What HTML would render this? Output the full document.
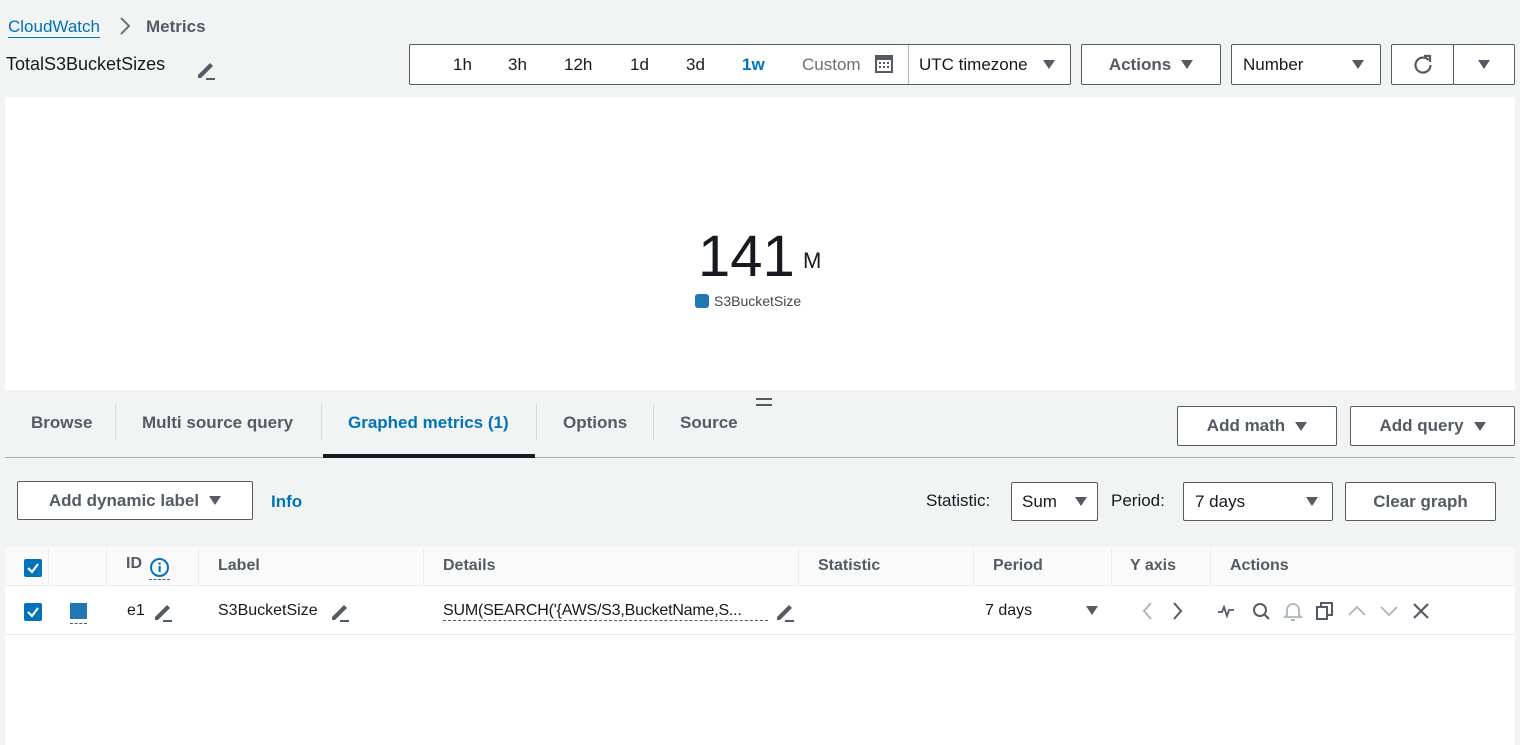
<!DOCTYPE html>
<html><head><meta charset="utf-8"><style>
*{box-sizing:border-box;margin:0;padding:0}
body{width:1520px;height:745px;background:#f2f3f3;font-family:"Liberation Sans",sans-serif;color:#16191f;position:relative;overflow:hidden;font-size:16px}
.a{position:absolute;white-space:nowrap}
.btn{position:absolute;border:1px solid #545b64;border-radius:2px;background:#fff;display:flex;align-items:center;justify-content:center;font-weight:bold;color:#545b64;font-size:16px}
.tri{display:inline-block;width:0;height:0;border-left:6px solid transparent;border-right:6px solid transparent;border-top:9px solid #545b64;margin-left:10px}
.b{font-weight:bold;color:#545b64}
.sep{position:absolute;width:1px;background:#d5dbdb}
</style></head><body>
<div class="a" style="left:8px;top:17px;font-size:17px;color:#0073bb;border-bottom:1px solid #0073bb;line-height:20px">CloudWatch</div>
<svg class="a" style="left:118px;top:16px" width="14" height="20"><path d="M3 2 L11 10 L3 18" stroke="#687078" stroke-width="2" fill="none"/></svg>
<div class="a b" style="left:146px;top:17px;font-size:17px">Metrics</div>
<div class="a" style="left:6px;top:54px;font-size:18px">TotalS3BucketSizes</div>
<svg class="a" style="left:195px;top:58px" width="22" height="22"><path d="M3 17 L15 5 L18 8 L6 20 L3 20 Z" fill="#545b64"/><path d="M11 21 H20" stroke="#545b64" stroke-width="2"/></svg>

<div class="a" style="left:409px;top:44px;width:662px;height:41px;background:#fff;border:1px solid #545b64;border-radius:2px"></div>
<div class="a" style="left:453px;top:55px;font-size:17px">1h</div>
<div class="a" style="left:508px;top:55px;font-size:17px">3h</div>
<div class="a" style="left:564px;top:55px;font-size:17px">12h</div>
<div class="a" style="left:630px;top:55px;font-size:17px">1d</div>
<div class="a" style="left:686px;top:55px;font-size:17px">3d</div>
<div class="a" style="left:742px;top:55px;font-size:17px;font-weight:bold;color:#0073bb">1w</div>
<div class="a" style="left:802px;top:55px;font-size:17px;color:#687078">Custom</div>
<svg class="a" style="left:875px;top:55px" width="18" height="18"><rect x="1" y="1" width="16" height="16" fill="none" stroke="#545b64" stroke-width="2"/><rect x="1" y="1" width="16" height="4" fill="#545b64"/><g fill="#545b64"><rect x="4" y="7" width="2" height="2"/><rect x="8" y="7" width="2" height="2"/><rect x="12" y="7" width="2" height="2"/><rect x="4" y="11" width="2" height="2"/><rect x="8" y="11" width="2" height="2"/><rect x="12" y="11" width="2" height="2"/></g></svg>
<div class="sep" style="left:908px;top:45px;height:39px;background:#aab7b8"></div>
<div class="a" style="left:919px;top:55px;font-size:17px">UTC timezone</div>
<span class="a tri" style="left:1033px;top:60px"></span>

<div class="btn" style="left:1081px;top:44px;width:140px;height:41px;font-size:17px">Actions<span class="tri"></span></div>
<div class="btn" style="left:1231px;top:44px;width:150px;height:41px;justify-content:space-between;padding:0 16px 0 11px;font-weight:normal;color:#16191f;font-size:17px">Number<span class="tri"></span></div>
<div class="btn" style="left:1391px;top:44px;width:63px;height:41px"><svg width="22" height="22"><path d="M16.5 6 A7.5 7.5 0 1 0 18.5 11" stroke="#545b64" stroke-width="2.2" fill="none"/><path d="M12 2 L18 2 L18 8" stroke="#545b64" stroke-width="2.2" fill="none"/></svg></div>
<div class="btn" style="left:1453px;top:44px;width:62px;height:41px"><span class="tri" style="margin:0"></span></div>

<div class="a" style="left:5px;top:97px;width:1510px;height:293px;background:#fff"></div>
<div class="a" style="left:698px;top:222px;font-size:58px;line-height:70px;color:#16191f">141</div>
<div class="a" style="left:803px;top:248px;font-size:22px">M</div>
<div class="a" style="left:695px;top:294px;width:14px;height:14px;border-radius:3px;background:#1f77b4"></div>
<div class="a" style="left:714px;top:293px;font-size:14px;color:#414750">S3BucketSize</div>

<div class="a b" style="left:31px;top:413px;font-size:17px">Browse</div>
<div class="sep" style="left:115px;top:404px;height:36px"></div>
<div class="a b" style="left:142px;top:413px;font-size:17px">Multi source query</div>
<div class="sep" style="left:321px;top:404px;height:36px"></div>
<div class="a" style="left:348px;top:413px;font-size:17px;font-weight:bold;color:#0073bb">Graphed metrics (1)</div>
<div class="sep" style="left:536px;top:404px;height:36px"></div>
<div class="a b" style="left:563px;top:413px;font-size:17px">Options</div>
<div class="sep" style="left:653px;top:404px;height:36px"></div>
<div class="a b" style="left:680px;top:413px;font-size:17px">Source</div>
<div class="a" style="left:756px;top:398px;width:16px;height:2px;background:#545b64"></div>
<div class="a" style="left:756px;top:404px;width:16px;height:2px;background:#545b64"></div>
<div class="a" style="left:5px;top:457px;width:1510px;height:1px;background:#aab7b8"></div>
<div class="a" style="left:323px;top:454px;width:212px;height:4px;background:#16191f"></div>
<div class="btn" style="left:1177px;top:406px;width:160px;height:40px;font-size:17px">Add math<span class="tri"></span></div>
<div class="btn" style="left:1350px;top:406px;width:165px;height:40px;font-size:17px">Add query<span class="tri"></span></div>

<div class="btn" style="left:17px;top:481px;width:236px;height:39px;font-size:17px">Add dynamic label<span class="tri"></span></div>
<div class="a" style="left:271px;top:492px;font-size:17px;font-weight:bold;color:#0073bb">Info</div>
<div class="a" style="left:926px;top:491px;font-size:17px">Statistic:</div>
<div class="btn" style="left:1011px;top:482px;width:87px;height:39px;justify-content:space-between;padding:0 10px;font-weight:normal;color:#16191f;font-size:17px">Sum<span class="tri"></span></div>
<div class="a" style="left:1111px;top:491px;font-size:17px">Period:</div>
<div class="btn" style="left:1183px;top:482px;width:150px;height:39px;justify-content:space-between;padding:0 14px 0 11px;font-weight:normal;color:#16191f;font-size:17px">7 days<span class="tri"></span></div>
<div class="btn" style="left:1345px;top:482px;width:151px;height:39px;font-size:17px">Clear graph</div>

<div class="a" style="left:5px;top:547px;width:1510px;height:198px;background:#fff"></div>
<div class="a" style="left:5px;top:547px;width:1510px;height:39px;background:#fafafa;border-bottom:1px solid #eaeded"></div>
<div class="a" style="left:5px;top:634px;width:1510px;height:1px;background:#eaeded"></div>
<div class="sep" style="left:48px;top:547px;height:39px;background:#eaeded"></div>
<div class="sep" style="left:106px;top:547px;height:39px;background:#eaeded"></div>
<div class="sep" style="left:198px;top:547px;height:39px;background:#eaeded"></div>
<div class="sep" style="left:423px;top:547px;height:39px;background:#eaeded"></div>
<div class="sep" style="left:798px;top:547px;height:39px;background:#eaeded"></div>
<div class="sep" style="left:973px;top:547px;height:39px;background:#eaeded"></div>
<div class="sep" style="left:1111px;top:547px;height:39px;background:#eaeded"></div>
<div class="sep" style="left:1210px;top:547px;height:39px;background:#eaeded"></div>

<svg class="a" style="left:24px;top:559px" width="18" height="18"><rect width="18" height="18" rx="2" fill="#0073bb"/><path d="M4 9 L8 13 L14 5" stroke="#fff" stroke-width="2.2" fill="none"/></svg>
<div class="a b" style="left:126px;top:555px;font-size:16px">ID</div>
<svg class="a" style="left:149px;top:557px" width="21" height="21"><circle cx="10.5" cy="10.5" r="8.5" fill="none" stroke="#0073bb" stroke-width="2"/><rect x="9.5" y="9" width="2.2" height="6" fill="#0073bb"/><rect x="9.5" y="5.5" width="2.2" height="2.2" fill="#0073bb"/></svg>
<div class="a" style="left:149px;top:579px;width:21px;border-top:1px dashed #545b64"></div>
<div class="a b" style="left:218px;top:557px;font-size:16px">Label</div>
<div class="a b" style="left:443px;top:557px;font-size:16px">Details</div>
<div class="a b" style="left:818px;top:557px;font-size:16px">Statistic</div>
<div class="a b" style="left:993px;top:557px;font-size:16px">Period</div>
<div class="a b" style="left:1130px;top:557px;font-size:16px">Y axis</div>
<div class="a b" style="left:1230px;top:557px;font-size:16px">Actions</div>

<svg class="a" style="left:24px;top:603px" width="18" height="18"><rect width="18" height="18" rx="2" fill="#0073bb"/><path d="M4 9 L8 13 L14 5" stroke="#fff" stroke-width="2.2" fill="none"/></svg>
<div class="a" style="left:70px;top:603px;width:17px;height:16px;background:#1f77b4"></div>
<div class="a" style="left:70px;top:623px;width:17px;border-top:1px dashed #545b64"></div>
<div class="a" style="left:127px;top:602px;font-size:16px">e1</div>
<svg class="a" style="left:152px;top:600px" width="22" height="22"><path d="M3 17 L15 5 L18 8 L6 20 L3 20 Z" fill="#545b64"/><path d="M11 21 H20" stroke="#545b64" stroke-width="2"/></svg>
<div class="a" style="left:218px;top:602px;font-size:16px">S3BucketSize</div>
<svg class="a" style="left:329px;top:600px" width="22" height="22"><path d="M3 17 L15 5 L18 8 L6 20 L3 20 Z" fill="#545b64"/><path d="M11 21 H20" stroke="#545b64" stroke-width="2"/></svg>
<div class="a" style="left:443px;top:602px;font-size:16px;border-bottom:1px dashed #545b64;width:325px;overflow:hidden;letter-spacing:-0.2px">SUM(SEARCH('{AWS/S3,BucketName,S...</div>
<svg class="a" style="left:774px;top:600px" width="22" height="22"><path d="M3 17 L15 5 L18 8 L6 20 L3 20 Z" fill="#545b64"/><path d="M11 21 H20" stroke="#545b64" stroke-width="2"/></svg>
<div class="a" style="left:985px;top:602px;font-size:16px">7 days</div>
<span class="a tri" style="left:1086px;top:606px;margin:0"></span>
<svg class="a" style="left:1138px;top:600px" width="50" height="22"><path d="M13 3 L6 11 L13 19" stroke="#aab7b8" stroke-width="2" fill="none"/><path d="M36 3 L43 11 L36 19" stroke="#545b64" stroke-width="2" fill="none"/></svg>
<svg class="a" style="left:1216px;top:600px" width="220" height="22">
<path d="M2 12 H6 L8 7 L11 16 L13 10 H18" stroke="#545b64" stroke-width="1.8" fill="none"/>
<circle cx="44" cy="10" r="6" stroke="#545b64" stroke-width="2" fill="none"/><path d="M48 14 L53 19" stroke="#545b64" stroke-width="2.2"/>
<path d="M71 15 V10 A6 6 0 0 1 83 10 V15 L85 17 H69 Z" stroke="#aab7b8" stroke-width="1.8" fill="none"/><path d="M75 20 H79" stroke="#aab7b8" stroke-width="2"/>
<rect x="101" y="7" width="10" height="12" stroke="#545b64" stroke-width="2" fill="none"/><path d="M105 7 V3 H116 V15 H111" stroke="#545b64" stroke-width="2" fill="none"/>
<path d="M133 15 L141 7 L149 15" stroke="#aab7b8" stroke-width="1.8" fill="none"/>
<path d="M165 7 L173 15 L181 7" stroke="#aab7b8" stroke-width="1.8" fill="none"/>
<path d="M198 4 L212 18 M212 4 L198 18" stroke="#545b64" stroke-width="2.2"/>
</svg>
</body></html>
